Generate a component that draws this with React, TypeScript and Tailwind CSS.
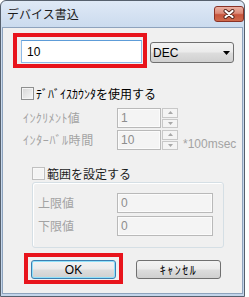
import React from "react";

// 「デバイス書込」ダイアログ — Win7 ベーシック風の枠。
// 赤い枠は説明用の注記なので absolute で重ねている。

const JP = "font-['Noto_Sans_CJK_JP',sans-serif]";

const BUTTON_BG =
  "bg-[linear-gradient(#f3f3f3_0%,#ebebeb_48%,#dddddd_52%,#d0d0d0_100%)]";

const DISABLED_BOX =
  "flex h-[20px] items-center border border-[#b9b9b9] bg-[#f4f4f4] pl-[3px] text-[#8d8d8d] shadow-[inset_0_0_0_1px_#fbfbfb]";

function CloseButton() {
  return (
    <div className="mt-[5px] flex h-[16px] w-[30px] items-center justify-center self-start rounded-[3px] border border-[#8a3226] bg-[linear-gradient(#eab0a2_0%,#dc8a78_45%,#c7543c_55%,#cf6a4c_100%)]">
      <svg width="12" height="10" viewBox="0 0 12 10">
        <path d="M2.5 2 L9.5 8 M9.5 2 L2.5 8" stroke="#54241b" strokeWidth="4" strokeLinecap="round" />
        <path d="M2.5 2 L9.5 8 M9.5 2 L2.5 8" stroke="#ffffff" strokeWidth="2.2" strokeLinecap="round" />
      </svg>
    </div>
  );
}

function CheckBox({ disabled }: { disabled?: boolean }) {
  return (
    <span
      className={
        disabled
          ? "h-[13px] w-[13px] shrink-0 border border-[#c0c0c0] bg-[#f4f4f4] shadow-[inset_0_0_0_1px_#f8f8f8]"
          : "h-[13px] w-[13px] shrink-0 border border-[#8e8f8f] bg-[linear-gradient(135deg,#d6d6d6,#f6f6f6)] shadow-[inset_0_0_0_1px_#f4f4f4]"
      }
    />
  );
}

function Arrow({ up }: { up?: boolean }) {
  return (
    <svg width="5" height="3" viewBox="0 0 5 3">
      <polygon points={up ? "0,3 5,3 2.5,0" : "0,0 5,0 2.5,3"} fill="#a8a8a8" />
    </svg>
  );
}

function Spinner() {
  return (
    <div className="ml-[1px] flex h-[20px] w-[16px] flex-col gap-[1px]">
      <div className="flex flex-1 items-center justify-center border border-[#c8c8c8] bg-[#f4f4f4]">
        <Arrow up />
      </div>
      <div className="flex flex-1 items-center justify-center border border-[#c8c8c8] bg-[#f4f4f4]">
        <Arrow />
      </div>
    </div>
  );
}

export default function App() {
  return (
    <div className="min-h-screen bg-white font-['Liberation_Sans','Noto_Sans_CJK_JP',sans-serif] text-[12px] leading-none">
      <div className="flex h-[297px] w-[245px] flex-col rounded-t-[6px] border border-[#56606d] bg-[linear-gradient(#dfe9f6,#cbdbee_26px,#c3d5ea)]">
        {/* タイトルバー */}
        <div className="flex h-[26px] shrink-0 items-center justify-between pl-[6px]">
          <span className={`${JP} text-[12px] text-[#1c1c1c]`}>デバイス書込</span>
          <CloseButton />
        </div>

        {/* クライアント領域 */}
        <div className="relative mx-[1px] mb-[2px] flex flex-1 flex-col items-start border border-[#8ea3bd] bg-[#f0f0f0]">
          {/* 値 + 表示形式 */}
          <div className="ml-[18px] mt-[12px] flex items-end gap-[8px]">
            <div className="flex h-[23px] w-[121px] items-center border border-[#8dbbe9] border-t-[#5d9cd8] bg-white pl-[5px] text-black">
              10
            </div>
            <div className={`flex h-[21px] w-[84px] items-center justify-between rounded-[3px] border border-[#707070] ${BUTTON_BG} pl-[2px] pr-[3px] text-black`}>
              <span>DEC</span>
              <svg width="7" height="4" viewBox="0 0 7 4">
                <polygon points="0,0 7,0 3.5,4" fill="#000" />
              </svg>
            </div>
          </div>

          {/* デバイスカウンタ */}
          <div className="ml-[18px] mt-[24px] flex h-[13px] items-center gap-[2px]">
            <CheckBox />
            <span className={`${JP} text-black`}>ﾃﾞﾊﾞｲｽｶｳﾝﾀを使用する</span>
          </div>

          <div className="ml-[20px] mt-[8px] flex items-center">
            <span className={`${JP} w-[94px] tracking-[0.4px] text-[#a3a3a3]`}>ｲﾝｸﾘﾒﾝﾄ値</span>
            <div className={`${DISABLED_BOX} w-[44px]`}>1</div>
            <Spinner />
          </div>

          <div className="ml-[20px] mt-[2px] flex items-center">
            <span className={`${JP} w-[94px] tracking-[0.6px] text-[#a3a3a3]`}>ｲﾝﾀｰﾊﾞﾙ時間</span>
            <div className={`${DISABLED_BOX} w-[44px]`}>10</div>
            <Spinner />
            <span className="ml-[5px] mt-[7px] text-[#a3a3a3]">*100msec</span>
          </div>

          {/* 範囲 */}
          <div className="ml-[29px] mt-[17px] flex h-[13px] items-center gap-[2px]">
            <CheckBox disabled />
            <span className={`${JP} text-[#1c1c1c]`}>範囲を設定する</span>
          </div>

          <div className="ml-[29px] mt-[2px] flex h-[66px] w-[192px] flex-col gap-[3px] rounded-[3px] border border-[#d5dfe5] pl-[5px] pt-[10px] shadow-[inset_1px_1px_0_#ffffff]">
            <div className="flex items-center">
              <span className={`${JP} w-[79px] text-[#a3a3a3]`}>上限値</span>
              <div className={`${DISABLED_BOX} w-[96px]`}>0</div>
            </div>
            <div className="flex items-center">
              <span className={`${JP} w-[79px] text-[#a3a3a3]`}>下限値</span>
              <div className={`${DISABLED_BOX} w-[96px]`}>0</div>
            </div>
          </div>

          {/* ボタン */}
          <div className="ml-[28px] mt-[12px] flex gap-[20px]">
            <button className={`flex h-[19px] w-[85px] items-center justify-center rounded-[3px] border border-[#3c7fb1] ${BUTTON_BG} font-normal text-black shadow-[inset_0_0_0_1px_#8fe1fb]`}>
              OK
            </button>
            <button className={`${JP} flex h-[19px] w-[85px] items-center justify-center rounded-[3px] border border-[#707070] ${BUTTON_BG} tracking-[1.5px] text-black`}>
              ｷｬﾝｾﾙ
            </button>
          </div>

          {/* 注記の赤枠 */}
          <div className="absolute left-[10px] top-[5px] h-[35px] w-[134px] border-[4px] border-[#e8141c]" />
          <div className="absolute left-[21px] top-[225px] h-[31px] w-[99px] border-[4px] border-[#e8141c]" />
        </div>
      </div>
    </div>
  );
}
